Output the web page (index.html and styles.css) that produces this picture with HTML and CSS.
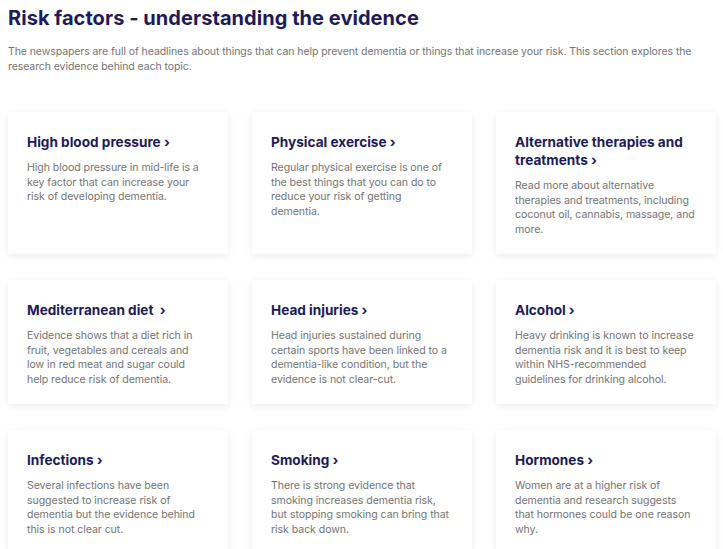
FILE: index.html
```html
<!DOCTYPE html>
<html lang="en">
<head>
<meta charset="utf-8">
<title>Risk factors - understanding the evidence</title>
<link rel="stylesheet" href="styles.css">
</head>
<body>
<main class="page">
  <h1 class="page-title">Risk factors - understanding the evidence</h1>
  <p class="intro">The newspapers are full of headlines about things that can help prevent dementia or things that increase your risk. This section explores the research evidence behind each topic.</p>
  <div class="grid">
    <a class="card" href="#">
      <h2 class="card-title">High blood pressure ›</h2>
      <p class="card-text">High blood pressure in mid-life is a key factor that can increase your risk of developing dementia.</p>
    </a>
    <a class="card" href="#">
      <h2 class="card-title">Physical exercise ›</h2>
      <p class="card-text">Regular physical exercise is one of the best things that you can do to reduce your risk of getting dementia.</p>
    </a>
    <a class="card" href="#">
      <h2 class="card-title">Alternative therapies and treatments ›</h2>
      <p class="card-text">Read more about alternative therapies and treatments, including coconut oil, cannabis, massage, and more.</p>
    </a>
    <a class="card" href="#">
      <h2 class="card-title">Mediterranean diet &nbsp;›</h2>
      <p class="card-text">Evidence shows that a diet rich in fruit, vegetables and cereals and low in red meat and sugar could help reduce risk of dementia.</p>
    </a>
    <a class="card" href="#">
      <h2 class="card-title">Head injuries ›</h2>
      <p class="card-text">Head injuries sustained during certain sports have been linked to a dementia-like condition, but the evidence is not clear-cut.</p>
    </a>
    <a class="card" href="#">
      <h2 class="card-title">Alcohol ›</h2>
      <p class="card-text">Heavy drinking is known to increase dementia risk and it is best to keep within NHS-recommended guidelines for drinking alcohol.</p>
    </a>
    <a class="card" href="#">
      <h2 class="card-title">Infections ›</h2>
      <p class="card-text">Several infections have been suggested to increase risk of dementia but the evidence behind this is not clear cut.</p>
    </a>
    <a class="card" href="#">
      <h2 class="card-title">Smoking ›</h2>
      <p class="card-text">There is strong evidence that smoking increases dementia risk, but stopping smoking can bring that risk back down.</p>
    </a>
    <a class="card" href="#">
      <h2 class="card-title">Hormones ›</h2>
      <p class="card-text">Women are at a higher risk of dementia and research suggests that hormones could be one reason why.</p>
    </a>
  </div>
</main>
</body>
</html>
```

FILE: styles.css
```css
html, body {
  margin: 0;
  padding: 0;
  background: #ffffff;
}

body {
  font-family: Inter, "Open Sans", Arial, sans-serif;
  color: #6f6f6f;
}

.page {
  padding: 6px 7px 20px 8px;
}

.page-title {
  margin: 0;
  font-size: 20px;
  line-height: 24px;
  font-weight: 700;
  color: #1e1b5b;
  letter-spacing: 0.05px;
}

.intro {
  margin: 14px -7px 0 0;
  font-size: 10.5px;
  line-height: 15px;
  letter-spacing: -0.08px;
  color: #747474;
}

.grid {
  margin-top: 38px;
  display: grid;
  grid-template-columns: repeat(3, 1fr);
  column-gap: 24px;
  row-gap: 26px;
}

.card {
  display: block;
  text-decoration: none;
  background: #ffffff;
  box-shadow: 0 2px 8px rgba(0, 0, 0, 0.08);
  padding: 21px 21px 17px 19px;
}

.card-title {
  margin: 0;
  font-size: 13.6px;
  line-height: 18px;
  font-weight: 700;
  color: #1e1b5b;
}

.card-text {
  margin: 10px 0 0;
  font-size: 10.55px;
  line-height: 14.5px;
  letter-spacing: -0.05px;
  color: #747474;
}
```
